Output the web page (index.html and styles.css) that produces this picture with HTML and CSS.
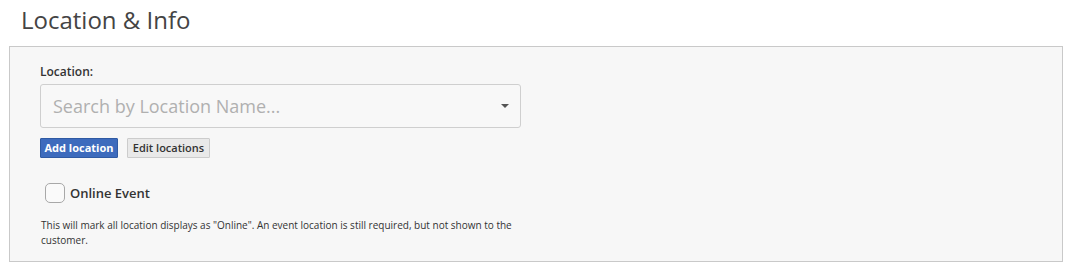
FILE: index.html
```html
<!DOCTYPE html>
<html lang="en">
<head>
<meta charset="utf-8">
<title>Location &amp; Info</title>
<link rel="stylesheet" href="styles.css">
</head>
<body>
<div class="page">
  <h2 class="section-title">Location &amp; Info</h2>
  <div class="panel">
    <label class="field-label" for="loc">Location:</label>
    <div class="select">
      <span class="select-placeholder">Search by Location Name...</span>
      <span class="select-caret"></span>
    </div>
    <div class="btn-row">
      <button class="btn btn-primary" type="button">Add location</button>
      <button class="btn btn-default" type="button">Edit locations</button>
    </div>
    <label class="check-row">
      <span class="checkbox"></span>
      <span class="check-label">Online Event</span>
    </label>
    <p class="help">This will mark all location displays as "Online". An event location is still required, but not shown to the customer.</p>
  </div>
</div>
</body>
</html>
```

FILE: styles.css
```css
* { box-sizing: border-box; }
html, body { margin: 0; padding: 0; background: #fff; }
body {
  font-family: "Open Sans", "Noto Sans", "Liberation Sans", sans-serif;
  color: #333;
}
.page { padding: 2px 14px 0 9px; }
.section-title {
  margin: 0 0 8px 12px;
  font-size: 24px;
  line-height: 36px;
  font-weight: 400;
  color: #444;
}
.panel {
  background: #f7f7f7;
  border: 1px solid #c9c9c9;
  padding: 16px 30px 16px 30px;
  height: 216px;
}
.field-label {
  display: block;
  font-size: 12px;
  line-height: 17px;
  font-weight: 600;
  color: #333;
  margin-bottom: 4px;
}
.select {
  width: 481px;
  height: 44px;
  border: 1px solid #cfcfcf;
  border-radius: 3px;
  background: #f8f8f8;
  display: flex;
  align-items: center;
  justify-content: space-between;
  padding: 0 11px 0 12px;
}
.select-placeholder {
  font-size: 18px;
  color: #b0b0b0;
  line-height: 24px;
}
.select-caret {
  width: 0;
  height: 0;
  border-left: 4px solid transparent;
  border-right: 4px solid transparent;
  border-top: 4px solid #555;
}
.btn-row {
  display: flex;
  gap: 9px;
  margin-top: 10px;
}
.btn {
  font-family: inherit;
  font-size: 11px;
  line-height: 18px;
  height: 20px;
  padding: 0;
  border-radius: 1px;
  font-weight: 600;
  white-space: nowrap;
  text-align: center;
  cursor: pointer;
  margin: 0;
}
.btn-primary {
  background: #3d6bbd;
  border: 1px solid #2f5aa3;
  color: #fff;
  font-weight: 700;
  width: 78px;
}
.btn-default {
  background: #e9e9e9;
  border: 1px solid #cccccc;
  color: #333;
  width: 83px;
}
.check-row {
  display: flex;
  align-items: center;
  gap: 5px;
  margin-top: 25px;
  margin-left: 5px;
}
.checkbox {
  width: 20px;
  height: 20px;
  border: 1px solid #a8a8a8;
  border-radius: 5px;
  background: #fafafa;
}
.check-label {
  font-size: 13px;
  font-weight: 600;
  color: #333;
  line-height: 18px;
}
.help {
  width: 481px;
  margin: 15px 0 0 1px;
  font-size: 10px;
  line-height: 15px;
  color: #333;
}
```
